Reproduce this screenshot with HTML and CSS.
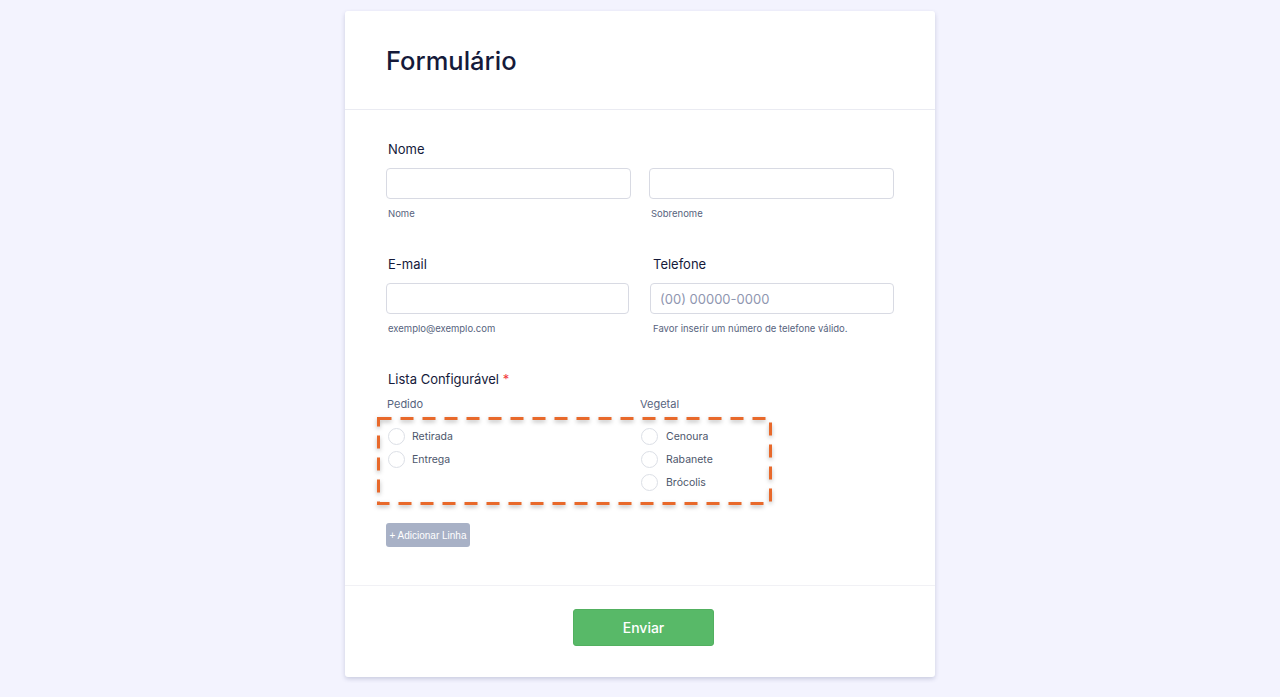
FILE: index.html
```html
<!DOCTYPE html>
<html lang="pt">
<head>
<meta charset="utf-8">
<title>Formulário</title>
<link rel="stylesheet" href="styles.css">
</head>
<body>
<div class="card">
  <div class="header">
    <h1 class="title">Formulário</h1>
  </div>
  <div class="content">
    <div class="field">
      <div class="label">Nome</div>
      <div class="row2">
        <div class="col">
          <div class="input"></div>
          <div class="sublabel">Nome</div>
        </div>
        <div class="col">
          <div class="input"></div>
          <div class="sublabel">Sobrenome</div>
        </div>
      </div>
    </div>
    <div class="field field-contact">
      <div class="row2 row2b">
        <div class="col">
          <div class="label">E-mail</div>
          <div class="input"></div>
          <div class="sublabel">exemplo@exemplo.com</div>
        </div>
        <div class="col">
          <div class="label">Telefone</div>
          <div class="input"><span class="placeholder">(00) 00000-0000</span></div>
          <div class="sublabel">Favor inserir um número de telefone válido.</div>
        </div>
      </div>
    </div>
    <div class="field">
      <div class="label">Lista Configurável <span class="req">*</span></div>
      <div class="colheads">
        <div class="colhead">Pedido</div>
        <div class="colhead">Vegetal</div>
      </div>
      <div class="options">
        <svg class="dash" width="395" height="88" viewBox="0 0 395 88">
          <rect x="1.5" y="1.5" width="392" height="85" fill="none" stroke="#e8692b" stroke-width="3" stroke-dasharray="13 9"/>
        </svg>
        <div class="optcol">
          <div class="opt"><span class="radio"></span><span class="opttext">Retirada</span></div>
          <div class="opt"><span class="radio"></span><span class="opttext">Entrega</span></div>
        </div>
        <div class="optcol">
          <div class="opt"><span class="radio"></span><span class="opttext">Cenoura</span></div>
          <div class="opt"><span class="radio"></span><span class="opttext">Rabanete</span></div>
          <div class="opt"><span class="radio"></span><span class="opttext">Brócolis</span></div>
        </div>
      </div>
      <div class="addbtn">+ Adicionar Linha</div>
    </div>
  </div>
  <div class="footer">
    <div class="submit">Enviar</div>
  </div>
</div>
</body>
</html>
```
FILE: styles.css
```css
* { box-sizing: border-box; }
html, body { margin: 0; padding: 0; }
body {
  background: #f3f3fe;
  font-family: Inter, "Noto Sans", sans-serif;
  color: #0a1551;
  height: 697px;
  overflow: hidden;
}
.card {
  width: 590px;
  margin: 11px auto 0;
  background: #fff;
  border-radius: 3px;
  box-shadow: 0 2px 4px rgba(60, 70, 120, 0.22);
}
.header {
  height: 99px;
  padding: 34px 0 0 41px;
  border-bottom: 1px solid #eaebf2;
}
.title {
  margin: 0;
  font-size: 25.5px;
  line-height: 32px;
  font-weight: 500;
  color: #151a3a;
}
.content {
  padding: 29px 41px 38px 41px;
  border-bottom: 1px solid #f1f1f5;
}
.field { margin-bottom: 34px; }
.field-contact { margin-bottom: 33px; }
.field:last-child { margin-bottom: 0; }
.label {
  font-size: 13px;
  line-height: 20px;
  padding-left: 2px;
  margin-bottom: 9px;
  color: #151a3a;
}
.req { color: #f23a3c; }
.row2 {
  display: grid;
  grid-template-columns: 245px 245px;
  column-gap: 18px;
}
.row2b {
  grid-template-columns: 243px 244px;
  column-gap: 21px;
}
.row2b .col:last-child .label,
.row2b .col:last-child .sublabel { padding-left: 3px; }
.input {
  height: 31px;
  border: 1px solid #d8dae3;
  border-radius: 4px;
  padding-left: 9px;
  display: flex;
  align-items: center;
}
.placeholder {
  font-size: 13px;
  color: #8f96b0;
}
.sublabel {
  margin-top: 8px;
  font-size: 9.5px;
  line-height: 14px;
  padding-left: 2px;
  color: #57647e;
}
.field:first-child .sublabel { margin-bottom: -1px; }
.colheads {
  display: grid;
  grid-template-columns: 254px auto;
  margin-top: -2px;
  margin-bottom: 5px;
}
.colhead {
  font-size: 11px;
  line-height: 16px;
  color: #57647e;
  padding-left: 1px;
}
.colhead:last-child { padding-left: 0; }
.options {
  position: relative;
  width: 395px;
  height: 88px;
  margin-left: -9px;
  padding: 11px 0 0 11px;
  display: grid;
  grid-template-columns: 253px auto;
}
.dash {
  position: absolute;
  left: 0;
  top: 0;
  filter: drop-shadow(0 2px 2px rgba(0, 0, 0, 0.28));
}
.optcol { display: flex; flex-direction: column; gap: 7px; }
.opt {
  display: flex;
  align-items: center;
  height: 16px;
}
.radio {
  width: 17px;
  height: 17px;
  border: 1px solid #dcdfe6;
  border-radius: 50%;
  margin-right: 7px;
  flex: none;
}
.optcol:last-child .radio { margin-right: 8px; }
.opttext {
  font-size: 10.5px;
  color: #4d566b;
}
.addbtn {
  display: inline-flex;
  align-items: center;
  justify-content: center;
  margin-top: 18px;
  width: 84px;
  height: 24px;
  background: #a8b1c6;
  border-radius: 3px;
  color: #fff;
  font-family: "Liberation Sans", Arial, sans-serif;
  font-size: 10px;
}
.footer {
  display: flex;
  justify-content: center;
  padding: 23px 0 31px 7px;
}
.submit {
  width: 141px;
  height: 37px;
  background: #58b968;
  border: 1px solid #52b060;
  border-radius: 3px;
  color: #fff;
  font-size: 14px;
  font-weight: 500;
  display: flex;
  align-items: center;
  justify-content: center;
}
```
